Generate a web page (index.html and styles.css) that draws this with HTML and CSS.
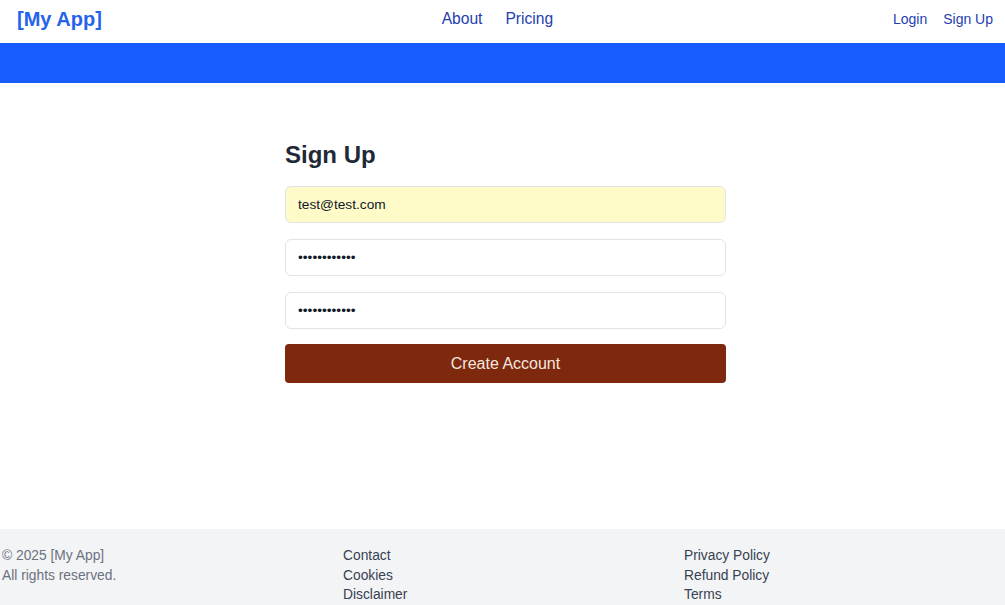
FILE: index.html
```html
<!DOCTYPE html>
<html>
<head>
<meta charset="utf-8">
<link rel="stylesheet" href="styles.css">
</head>
<body>
<header class="nav">
  <a class="logo" href="#">[My App]</a>
  <nav class="center-links">
    <a href="#">About</a>
    <a href="#">Pricing</a>
  </nav>
  <nav class="right-links">
    <a href="#">Login</a>
    <a href="#">Sign Up</a>
  </nav>
</header>
<div class="band"></div>
<main class="main">
  <form class="form">
    <h1 class="title">Sign Up</h1>
    <input class="field autofill" type="email" value="test@test.com">
    <input class="field" type="password" value="password1234">
    <input class="field" type="password" value="password1234">
    <button class="submit" type="button">Create Account</button>
  </form>
</main>
<footer class="footer">
  <div class="col muted">
    <div>© 2025 [My App]</div>
    <div>All rights reserved.</div>
  </div>
  <div class="col">
    <a href="#">Contact</a>
    <a href="#">Cookies</a>
    <a href="#">Disclaimer</a>
  </div>
  <div class="col">
    <a href="#">Privacy Policy</a>
    <a href="#">Refund Policy</a>
    <a href="#">Terms</a>
  </div>
</footer>
</body>
</html>
```
FILE: styles.css
```css
* { box-sizing: border-box; }
html, body { margin: 0; padding: 0; }
body {
  font-family: "Liberation Sans", Arial, sans-serif;
  background: #ffffff;
  color: #1f2937;
  width: 1005px;
  overflow: hidden;
}
a { text-decoration: none; }
.nav {
  height: 43px;
  display: flex;
  align-items: center;
  justify-content: space-between;
  padding: 0 12px 0 17px;
}
.logo {
  color: #2563eb;
  font-weight: bold;
  font-size: 20px;
  margin-top: -5px;
}
.center-links {
  display: flex;
  gap: 23px;
  margin-left: 0;
  margin-top: -6px;
}
.center-links a {
  color: #1e40af;
  font-size: 15.6px;
}
.right-links {
  display: flex;
  gap: 16px;
  margin-top: -5px;
}
.right-links a {
  color: #1e40af;
  font-size: 14px;
}
.band {
  height: 40px;
  background: #175cff;
}
.main {
  height: 446px;
  display: flex;
  justify-content: center;
  padding-top: 57px;
}
.form {
  width: 441px;
  display: flex;
  flex-direction: column;
  gap: 16px;
  margin-left: 6px;
}
.title {
  font-size: 24px;
  font-weight: bold;
  margin: 0;
  line-height: 30px;
  color: #1f2937;
}
.field {
  height: 37px;
  border: 1px solid #e1e3e8;
  border-radius: 6px;
  padding: 0 12px;
  font-family: "Liberation Sans", Arial, sans-serif;
  font-size: 13.7px;
  color: #111827;
  background: #ffffff;
  outline: none;
}
.field.autofill {
  background: #fefbc8;
}
.submit {
  height: 39px;
  border: none;
  border-radius: 4px;
  background: #7e280e;
  color: #f5e6df;
  font-family: "Liberation Sans", Arial, sans-serif;
  font-size: 16px;
  margin-top: -1px;
}
.footer {
  background: #f3f4f6;
  height: 76px;
  display: grid;
  grid-template-columns: 341px 341px 323px;
  padding: 17px 0 0 2px;
  font-size: 13.8px;
  line-height: 19.6px;
}
.col {
  display: flex;
  flex-direction: column;
}
.col a { color: #374151; }
.muted { color: #6b7280; }
```
